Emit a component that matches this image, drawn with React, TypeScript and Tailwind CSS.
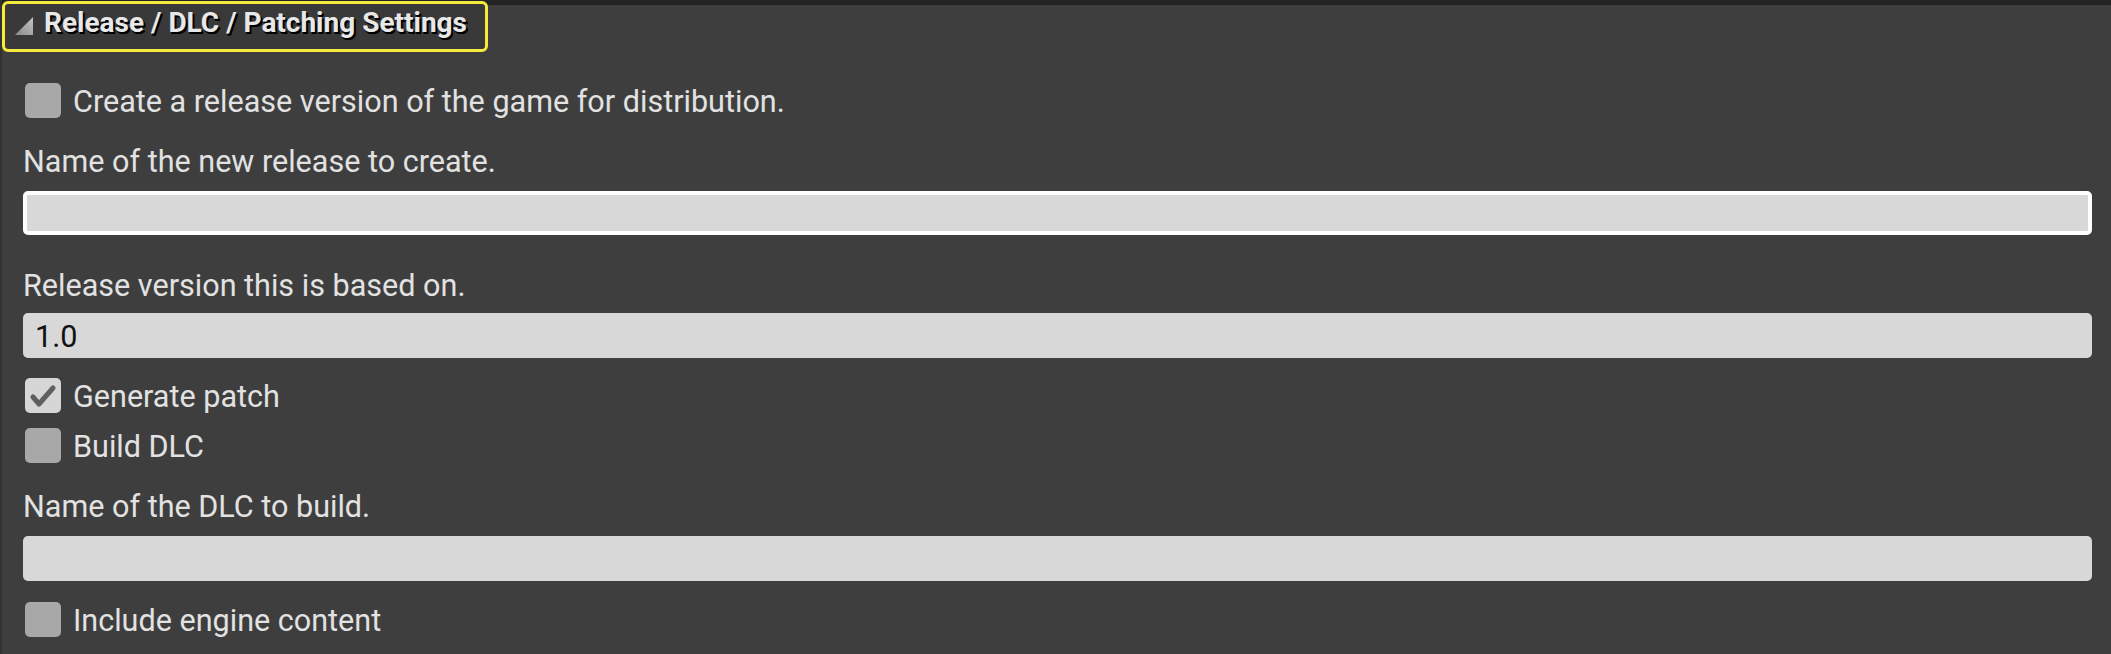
const font = { fontFamily: "Roboto, 'Noto Sans', sans-serif" };

// UE draws the editor text a touch narrower than stock Roboto
const txt = "inline-block origin-left scale-x-[0.955] whitespace-nowrap";

function Checkbox({ checked }: { checked?: boolean }) {
  return (
    <div
      className={
        "w-[36px] h-[35px] rounded-[5px] shrink-0 flex items-center justify-center " +
        (checked ? "bg-[#d6d6d6]" : "bg-[#a8a8a8]")
      }
    >
      {checked && (
        <svg width="36" height="35" viewBox="0 0 36 35">
          <path
            d="M8 19 L14 26 L28 10"
            fill="none"
            stroke="#5f5f5f"
            strokeWidth="5"
            strokeLinecap="round"
            strokeLinejoin="round"
          />
        </svg>
      )}
    </div>
  );
}

function CheckRow({ label, checked, className }: { label: string; checked?: boolean; className: string }) {
  return (
    <div className={"flex items-center h-[35px] pl-[23px] " + className}>
      <Checkbox checked={checked} />
      <span className={"ml-[12px] text-[32px] leading-[36px] text-[#e2e2e2] " + txt}>{label}</span>
    </div>
  );
}

function Label({ text, className }: { text: string; className: string }) {
  return (
    <div className={"pl-[21px] h-[36px] text-[32px] leading-[36px] text-[#e2e2e2] " + className}>
      <span className={txt}>{text}</span>
    </div>
  );
}

function Field({ value, focused, className }: { value?: string; focused?: boolean; className: string }) {
  return (
    <div className={"ml-[21px] mr-[19px] " + className}>
      <div
        className={
          "h-full rounded-[5px] bg-[#d8d8d8] flex items-center pl-[12px] text-[32px] leading-[36px] text-[#111] " +
          (focused ? "border-[4px] border-white" : "")
        }
      >
        {value && <span className={txt}>{value}</span>}
      </div>
    </div>
  );
}

export default function App() {
  return (
    <div
      style={font}
      className="w-[2111px] h-[654px] bg-[#3e3e3e] border-l-2 border-[#313131] overflow-hidden"
    >
      {/* header */}
      <div className="h-[53px] bg-[linear-gradient(#232323_0_5px,#3e3e3e_5px)] pt-[1px] -ml-[1px]">
        <div className="w-[486px] h-[51px] ml-[1px] rounded-[6px] border-[3px] border-[#f6ea3c] bg-[#393939] flex items-start pt-[5px] pl-[10px]">
          <svg width="18" height="18" viewBox="0 0 18 18" className="mt-[8px] shrink-0">
            <defs>
              <linearGradient id="tri" x1="0" y1="1" x2="1" y2="0">
                <stop offset="0" stopColor="#8a8a8a" />
                <stop offset="1" stopColor="#c4c4c4" />
              </linearGradient>
            </defs>
            <polygon points="18,0 18,18 0,18" fill="url(#tri)" />
          </svg>
          <span className="ml-[11px] text-[28px] leading-[28px] font-bold text-[#e8e8e8] [text-shadow:2px_2px_0_#000,1px_2px_0_#000] whitespace-nowrap">
            Release / DLC / Patching Settings
          </span>
        </div>
      </div>

      <CheckRow className="mt-[30px]" label="Create a release version of the game for distribution." />
      <Label className="mt-[25px]" text="Name of the new release to create." />
      <Field className="mt-[12px] h-[44px]" focused />
      <Label className="mt-[32px]" text="Release version this is based on." />
      <Field className="mt-[10px] h-[45px]" value="1.0" />
      <CheckRow className="mt-[20px]" label="Generate patch" checked />
      <CheckRow className="mt-[15px]" label="Build DLC" />
      <Label className="mt-[25px]" text="Name of the DLC to build." />
      <Field className="mt-[12px] h-[45px]" />
      <CheckRow className="mt-[21px]" label="Include engine content" />
    </div>
  );
}
